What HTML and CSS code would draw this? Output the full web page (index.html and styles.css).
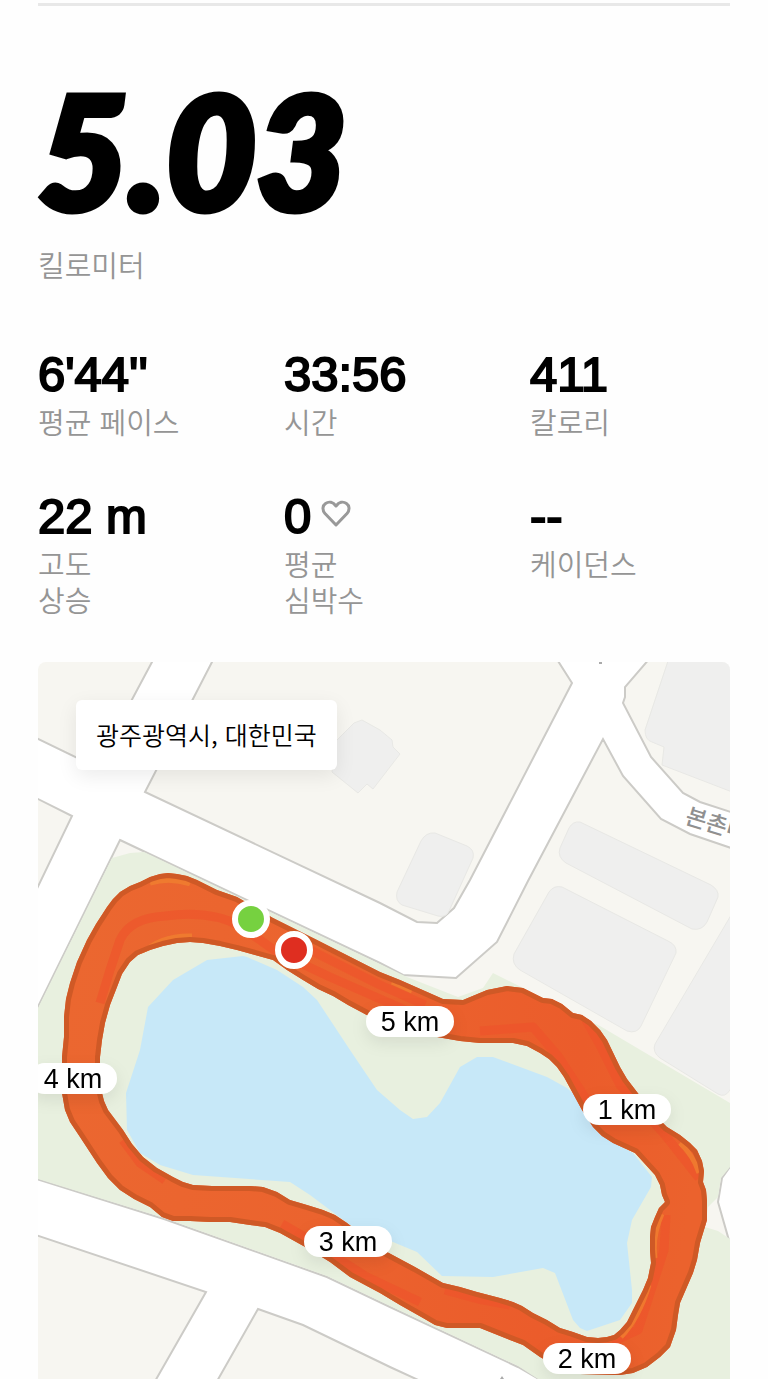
FILE: index.html
```html
<!DOCTYPE html>
<html lang="ko">
<head>
    <meta charset="UTF-8">
    <meta name="viewport" content="width=device-width, initial-scale=1.0">
    <title>러닝 기록</title>
    <link rel="stylesheet" href="styles.css">
</head>
<body>
    <main class="run">
        <section class="distance">
            <h1 class="distance-value">5.03</h1>
            <p class="label">킬로미터</p>
        </section>

        <section class="stats">
            <div class="stat">
                <p class="value">6'44''</p>
                <p class="label">평균 페이스</p>
            </div>
            <div class="stat">
                <p class="value">33:56</p>
                <p class="label">시간</p>
            </div>
            <div class="stat">
                <p class="value">411</p>
                <p class="label">칼로리</p>
            </div>
            <div class="stat">
                <p class="value">22 m</p>
                <p class="label">고도<br>상승</p>
            </div>
            <div class="stat">
                <p class="value">0
                    <svg class="heart" viewBox="0 0 30 28" aria-hidden="true">
                        <path d="M15 25 L4 13.500 C1 10 1.500 5.500 4.500 3.500 C8 1 12 2 15 6 C18 2 22 1 25.500 3.500 C28.500 5.500 29 10 26 13.500 Z"/>
                    </svg>
                </p>
                <p class="label">평균<br>심박수</p>
            </div>
            <div class="stat">
                <p class="value">--</p>
                <p class="label">케이던스</p>
            </div>
        </section>

        <section class="map">
            <svg class="map-canvas" viewBox="38 662 692 717" role="img" aria-label="러닝 경로">
                <defs>
                    <path id="track" clip-rule="evenodd" fill-rule="evenodd" d="M160 874 L168 873 L177 874 L187 876 L197 880 L217 890 L237 897 L273 918 L317 940 L380 972 L400 980 L443 999 L463 1000 L475 995 L487 990 L507 986 L523 988 L543 998 L552 999 L562 1004 L573 1013 L582 1015 L591 1021 L600 1030 L607 1040 L620 1067 L627 1079 L637 1092 L652 1112 L667 1127 L680 1135 L690 1143 L697 1150 L702 1161 L704 1171 L703 1182 L706 1190 L707 1201 L707 1220 L700 1243 L697 1260 L693 1273 L680 1303 L678 1315 L676 1330 L670 1347 L660 1357 L647 1367 L633 1373 L620 1375 L580 1374 L560 1368 L540 1357 L523 1345 L500 1336 L480 1328 L447 1328 L435 1325 L423 1318 L400 1305 L380 1293 L350 1277 L330 1262 L307 1248 L280 1233 L265 1227 L250 1225 L230 1222 L210 1222 L190 1221 L173 1221 L162 1217 L150 1207 L134 1199 L120 1190 L108 1178 L97 1163 L80 1137 L70 1122 L65 1110 L62 1093 L62 1057 L64 1037 L64 1017 L66 999 L70 983 L77 962 L87 940 L96 924 L107 907 L113 899 L120 892 L130 886 L140 882 L150 877 Z M130 962 L138 955 L150 950 L163 946 L177 943 L190 942 L203 943 L220 946 L237 950 L255 955 L273 960 L287 970 L303 980 L318 989 L333 996 L348 1005 L363 1013 L385 1025 L410 1032 L437 1037 L460 1041 L480 1043 L513 1043 L527 1046 L540 1053 L549 1059 L557 1067 L564 1077 L570 1088 L582 1110 L593 1127 L602 1136 L613 1143 L635 1153 L645 1164 L655 1175 L660 1185 L662 1195 L665 1202 L659 1208 L655 1217 L651 1227 L650 1237 L650 1250 L651 1263 L648 1278 L643 1290 L633 1310 L627 1322 L620 1330 L614 1335 L607 1337 L598 1338 L587 1337 L573 1332 L560 1328 L547 1320 L533 1313 L522 1306 L513 1302 L500 1298 L477 1292 L460 1287 L443 1283 L415 1267 L387 1252 L366 1238 L347 1223 L335 1215 L323 1210 L307 1205 L290 1200 L277 1192 L263 1187 L250 1186 L233 1186 L212 1186 L193 1185 L183 1182 L173 1177 L157 1168 L143 1157 L132 1144 L123 1130 L108 1110 L104 1101 L102 1093 L100 1075 L100 1057 L102 1040 L105 1023 L110 1005 L117 987 L122 974 Z"/>
                    <clipPath id="trackClip"><use href="#track" clip-rule="evenodd"/></clipPath>
                    <linearGradient id="trackFill" gradientUnits="userSpaceOnUse" x1="62" y1="1000" x2="707" y2="1100">
                        <stop offset="0" stop-color="#eb6730"/>
                        <stop offset="0.450" stop-color="#eb632e"/>
                        <stop offset="0.800" stop-color="#eb5c2b"/>
                        <stop offset="1" stop-color="#eb622d"/>
                    </linearGradient>
                </defs>

                <!-- blocks between the roads -->
                <g class="block">
                    <path d="M30 650 H158 L152 662 L96 767 L30 735 Z"/>
                    <path d="M218 650 L212 662 L145 792 L380 903 L417 922 L437 923 L454 908 L470 880 L572 683 L551 650 Z"/>
                    <path d="M30 795 L72 816 L30 903 Z"/>
                    <path d="M120 840 L380 963 L403 975 L456 978 L497 942 L528 881 L603 739 L623 776 L661 819 L690 834 L740 851 V1153 L722 1178 L718 1202 L740 1279 V1390 H558 L518 1367 L390 1307 L327 1277 L164 1219 L30 1177 V1023 Z"/>
                    <path d="M30 1233 L206 1292 L150 1390 H30 Z"/>
                    <path d="M258 1309 L303 1325 L390 1367 L440 1390 H212 Z"/>
                    <path d="M657 650 L625 687 V697 L623 703 L651 757 L683 793 L700 802 L740 815 V650 Z"/>
                </g>

                <!-- park -->
                <path class="park" d="M112 858 L130 853 L144 852 L380 964 L407 977 L458 997 L483 988 L493 973 L600 1026 L730 1103 V1167 L721 1178 L718 1197 L708 1207 L705 1227 L718 1231 L730 1239 V1379 H538 L518 1366 L390 1306 L327 1276 L164 1218 L38 1179 V1008 Z"/>

                <g class="building">
                    <path d="M335 742 L354 723 L362 720 L380 730 L392 740 L393 747 L400 754 L373 789 L367 784 L358 793 L332 772 Z"/>
                    <path d="M435 833 L467 846 Q475 850 473 858 L449 911 Q446 918 438 916 L402 905 Q395 901 397 892 L421 841 Q426 832 435 833 Z"/>
                    <path d="M580 822 L711 885 Q719 890 718 897 L707 922 Q702 931 692 929 L566 863 Q557 857 560 848 L569 828 Q573 821 580 822 Z"/>
                    <path d="M562 887 L668 941 Q677 945 676 953 L641 1026 Q637 1034 627 1031 L520 970 Q511 964 514 954 L549 892 Q554 885 562 887 Z"/>
                    <path d="M740 900 L655 1044 Q652 1052 660 1058 L718 1094 Q725 1098 730 1090 L740 1075 Z"/>
                    <path d="M671 652 L645 730 Q645 740 652 742 L664 747 L662 765 L740 795 V652 Z"/>
                </g>

                <path class="lake" d="M243 956 L207 960 L173 980 L148 1007 L140 1050 L126 1093 L127 1130 L140 1153 L160 1165 L193 1175 L290 1182 L310 1195 L350 1225 L393 1242 L417 1252 L442 1276 L493 1277 L543 1268 L555 1273 L573 1320 L580 1328 L587 1331 L620 1320 L632 1303 L632 1290 L627 1243 L632 1220 L651 1187 L652 1177 L633 1153 L602 1136 L580 1100 L567 1088 L547 1077 L493 1057 L477 1057 L460 1067 L440 1103 L427 1117 L413 1119 L400 1110 L377 1090 L350 1050 L317 1000 L303 987 L277 970 L247 957 Z"/>

                <text class="road-name" transform="translate(684 823) rotate(17)">본촌마</text>
                <path class="speck" d="M599 662 h3 v2 h-3 Z M500 1379 l2 -3 l2 3 Z"/>

                <!-- running route -->
                <use href="#track" fill="url(#trackFill)"/>
                <g clip-path="url(#trackClip)">
                    <path class="streak" d="M100 1003 L110 970 L120 940 Q130 918 165 916 Q210 910 240 926 L277 952 L330 977 L410 1012"/>
                    <path class="streak" d="M300 945 L380 985 L425 1005"/>
                    <path class="streak" d="M480 1031 L533 1027 L558 1056 L590 1105"/>
                    <path class="streak" d="M586 1020 L600 1045 L620 1085 L665 1135 L699 1178"/>
                    <path class="streak" d="M666 1215 L664 1250 L651 1290 L638 1330 L612 1342"/>
                    <path class="streak" d="M123 1140 L140 1163 L165 1180"/>
                    <path class="streak" d="M282 1224 L310 1240 L365 1276 L420 1302"/>
                    <path class="streak" d="M445 1290 L478 1299 L510 1305"/>
                    <path class="glow" d="M150 883 Q170 877 190 884 M142 954 Q160 935 192 936 M392 982 L412 991 M680 1143 Q693 1155 699 1173 M662 1214 Q652 1236 655 1258 M649 1285 Q639 1318 621 1337"/>
                    <use href="#track" class="track-edge"/>
                </g>

                <circle class="pin start" cx="251" cy="919" r="16"/>
                <circle class="pin finish" cx="294" cy="950" r="16"/>

                <g class="marker">
                    <rect x="366" y="1006" width="88" height="31" rx="16"/>
                    <text x="410" y="1031">5 km</text>
                </g>
                <g class="marker">
                    <rect x="29" y="1063" width="88" height="31" rx="16"/>
                    <text x="73" y="1088">4 km</text>
                </g>
                <g class="marker">
                    <rect x="583" y="1094" width="88" height="31" rx="16"/>
                    <text x="627" y="1119">1 km</text>
                </g>
                <g class="marker">
                    <rect x="304" y="1226" width="88" height="31" rx="16"/>
                    <text x="348" y="1251">3 km</text>
                </g>
                <g class="marker">
                    <rect x="543" y="1343" width="88" height="31" rx="16"/>
                    <text x="587" y="1368">2 km</text>
                </g>
            </svg>
            <p class="place">광주광역시, 대한민국</p>
        </section>
    </main>
</body>
</html>
```

FILE: styles.css
```css
* {
    box-sizing: border-box;
}

body {
    margin: 0;
    background-color: #fefefe;
    color: #000;
    font-family: "Liberation Sans", "Noto Sans CJK KR", sans-serif;
}

h1,
p {
    margin: 0;
}

.run {
    padding: 3px 38px 0;
}

.distance {
    border-top: 3px solid #e8e8e8;
    padding-top: 56px;
}

.distance-value {
    padding-bottom: 8px;
    font-family: Lato, sans-serif;
    font-size: 156px;
    font-style: italic;
    font-weight: 900;
    line-height: 176px;
    -webkit-text-stroke: 7px #000;
}

.label {
    color: #959595;
    font-family: "Noto Sans CJK KR", sans-serif;
    font-size: 29px;
    font-weight: 350;
    line-height: 36px;
}

.stats {
    display: grid;
    grid-template-columns: repeat(3, 1fr);
    gap: 50px 46px;
    margin-top: 65px;
}

.value {
    display: flex;
    align-items: center;
    gap: 10px;
    font-size: 49px;
    line-height: 54px;
    padding-bottom: 2px;
    -webkit-text-stroke: 2px #000;
}

.heart {
    width: 30px;
    height: 28px;
    margin-bottom: 4px;
    fill: none;
    stroke: #999;
    stroke-width: 3;
    stroke-linejoin: round;
    -webkit-text-stroke: 0;
}

.map {
    position: relative;
    margin-top: 45px;
    border-radius: 8px 8px 0 0;
    overflow: hidden;
}

.map-canvas {
    display: block;
    width: 100%;
    background-color: #fff;
}

.place {
    position: absolute;
    top: 38px;
    left: 38px;
    padding: 16px 20px 18px;
    border-radius: 6px;
    background-color: #fff;
    box-shadow: 0 6px 20px rgba(0, 0, 0, 0.08);
    font-family: "Noto Sans CJK KR", sans-serif;
    font-size: 25px;
    font-weight: 350;
    line-height: 36px;
}

.block {
    fill: #f7f6f1;
    stroke: #cccbc7;
    stroke-width: 2;
}

.park {
    fill: #e8f0df;
}

.building {
    fill: #efefee;
    stroke: #e8e8e5;
    stroke-width: 1;
}

.lake {
    fill: #c7e8f8;
}

.road-name {
    fill: #909090;
    font-family: "Noto Sans CJK KR", sans-serif;
    font-size: 23px;
    font-weight: 500;
}

.speck {
    fill: #aaa;
}

.streak {
    fill: none;
    stroke: #ee522b;
    stroke-width: 9;
    stroke-linejoin: round;
    opacity: 0.6;
}

.glow {
    fill: none;
    stroke: #f07f30;
    stroke-width: 5;
    opacity: 0.8;
}

.track-edge {
    fill: none;
    stroke: #cf5926;
    stroke-width: 10;
    stroke-linejoin: round;
}

.pin {
    stroke: #fff;
    stroke-width: 6;
}

.start {
    fill: #76d140;
}

.finish {
    fill: #df2e20;
}

.marker {
    filter: drop-shadow(0 6px 8px rgba(0, 0, 0, 0.08));
}

.marker rect {
    fill: #fff;
}

.marker text {
    font-size: 27px;
    text-anchor: middle;
}
```
